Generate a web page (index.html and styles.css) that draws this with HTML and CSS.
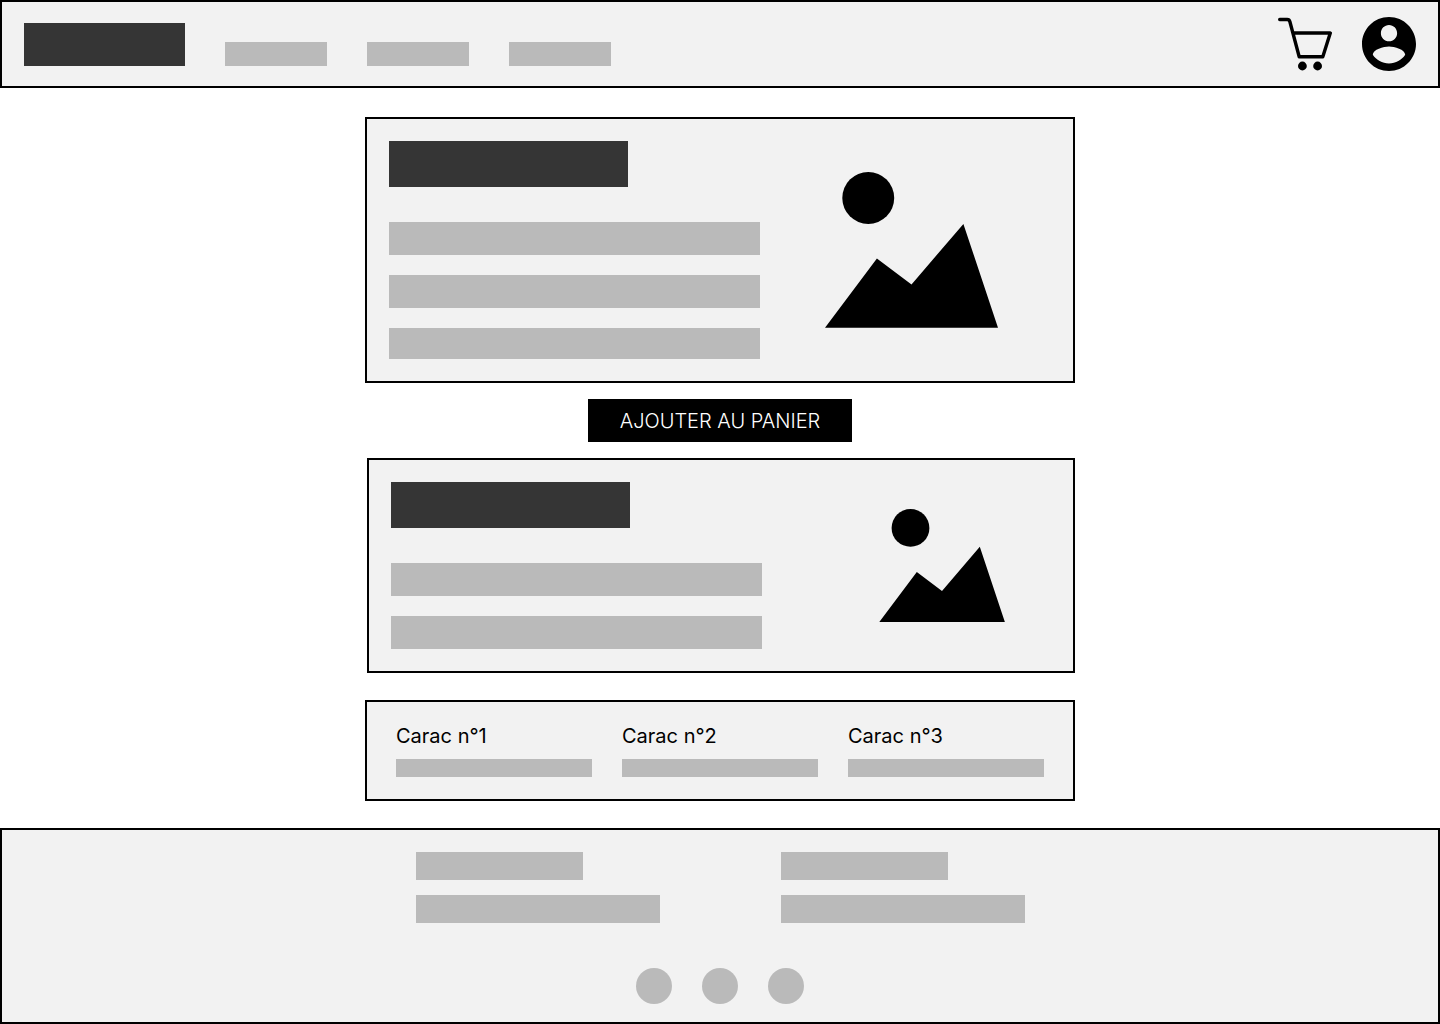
FILE: index.html
```html
<!DOCTYPE html>
<html lang="fr">
<head>
  <meta charset="utf-8">
  <meta name="viewport" content="width=device-width, initial-scale=1">
  <title>Produit</title>
  <link rel="stylesheet" href="styles.css">
</head>
<body>
  <header class="header">
    <a class="logo" href="#" aria-label="Accueil"></a>
    <nav class="nav" aria-label="Menu principal">
      <a class="nav-link" href="#" aria-label="Lien 1"></a>
      <a class="nav-link" href="#" aria-label="Lien 2"></a>
      <a class="nav-link" href="#" aria-label="Lien 3"></a>
    </nav>
    <div class="actions">
      <a class="action" href="#" aria-label="Panier">
        <svg class="icon" viewBox="0 0 54 54" aria-hidden="true">
          <path d="M1.7 2.5H9.200Q11.300 2.500 11.900 4.700L21.200 39.800H44.800L52.300 16H15.400" fill="none" stroke="#000" stroke-width="3.4" stroke-linecap="round" stroke-linejoin="round"/>
          <circle cx="24.4" cy="49" r="4.400"/>
          <circle cx="39.6" cy="49" r="4.400"/>
        </svg>
      </a>
      <a class="action" href="#" aria-label="Mon compte">
        <svg class="icon" viewBox="2 2 20 20" aria-hidden="true">
          <path d="M12 2C6.480 2 2 6.480 2 12s4.480 10 10 10 10-4.480 10-10S17.520 2 12 2zm0 3c1.660 0 3 1.340 3 3s-1.340 3-3 3-3-1.340-3-3 1.340-3 3-3zm0 14.200c-2.500 0-4.710-1.280-6-3.220.030-1.990 4-3.080 6-3.080s5.970 1.090 6 3.080c-1.290 1.940-3.500 3.220-6 3.220z"/>
        </svg>
      </a>
    </div>
  </header>

  <main class="main">
    <section class="card product">
      <div class="lines">
        <div class="title-bar"></div>
        <div class="bar"></div>
        <div class="bar"></div>
        <div class="bar bar-last"></div>
      </div>
      <svg class="picture picture-large" viewBox="0 0 20 18" role="img" aria-label="Photo du produit">
        <circle cx="5" cy="3" r="3"/>
        <path d="M0 18 6 10 10 13 16 6 20 18Z"/>
      </svg>
    </section>

    <button class="add-button" type="button">AJOUTER AU PANIER</button>

    <section class="card details">
      <div class="lines">
        <div class="title-bar"></div>
        <div class="bar"></div>
        <div class="bar"></div>
      </div>
      <svg class="picture picture-small" viewBox="0 0 20 18" role="img" aria-label="Photo de détail">
        <circle cx="5" cy="3" r="3"/>
        <path d="M0 18 6 10 10 13 16 6 20 18Z"/>
      </svg>
    </section>

    <section class="features">
      <div class="feature">
        <h2 class="feature-title">Carac n°1</h2>
        <div class="feature-bar"></div>
      </div>
      <div class="feature">
        <h2 class="feature-title">Carac n°2</h2>
        <div class="feature-bar"></div>
      </div>
      <div class="feature">
        <h2 class="feature-title">Carac n°3</h2>
        <div class="feature-bar"></div>
      </div>
    </section>
  </main>

  <footer class="footer">
    <div class="footer-columns">
      <div class="footer-column">
        <div class="footer-bar footer-bar-short"></div>
        <div class="footer-bar"></div>
      </div>
      <div class="footer-column">
        <div class="footer-bar footer-bar-short"></div>
        <div class="footer-bar"></div>
      </div>
    </div>
    <div class="socials">
      <a class="social" href="#" aria-label="Réseau 1"></a>
      <a class="social" href="#" aria-label="Réseau 2"></a>
      <a class="social" href="#" aria-label="Réseau 3"></a>
    </div>
  </footer>
</body>
</html>
```
FILE: styles.css
```css
:root {
  --panel: #f2f2f2;
  --dark: #353535;
  --grey: #bababa;
}

* {
  box-sizing: border-box;
}

body {
  margin: 0;
  background: #fff;
  color: #000;
  font-family: Inter, "Liberation Sans", sans-serif;
  font-size: 20px;
  line-height: 24px;
}

.header,
.card,
.features,
.footer {
  background: var(--panel);
  border: 2px solid #000;
}

.header {
  display: flex;
  align-items: center;
  gap: 40px;
  padding: 15px 22px;
}

.logo {
  width: 161px;
  height: 43px;
  background: var(--dark);
}

.nav {
  display: flex;
  align-items: flex-end;
  gap: 40px;
  height: 43px;
}

.nav-link {
  width: 102px;
  height: 24px;
  background: var(--grey);
}

.actions {
  display: flex;
  gap: 30px;
  margin-left: auto;
}

.action,
.icon {
  display: block;
  width: 54px;
  height: 54px;
}

.main {
  display: flex;
  flex-direction: column;
  align-items: center;
  max-width: 710px;
  margin: 29px auto 27px;
}

.card {
  display: flex;
  align-items: center;
  justify-content: space-between;
  width: 100%;
  padding: 22px;
}

.product {
  padding-right: 75px;
}

.details {
  align-self: flex-end;
  max-width: 708px;
  padding-right: 68px;
}

.lines {
  display: flex;
  flex-direction: column;
  gap: 20px;
  width: 371px;
}

.title-bar {
  width: 239px;
  height: 46px;
  margin-bottom: 15px;
  background: var(--dark);
}

.bar {
  height: 33px;
  background: var(--grey);
}

.bar-last {
  height: 31px;
}

.picture {
  display: block;
}

.picture-large {
  width: 173px;
}

.picture-small {
  width: 126px;
}

.add-button {
  min-width: 264px;
  margin: 16px 0;
  padding: 10px 20px 9px;
  border: 0;
  background: #000;
  color: #fff;
  font: inherit;
  font-weight: 300;
  cursor: pointer;
}

.features {
  display: grid;
  grid-template-columns: repeat(3, 1fr);
  gap: 30px;
  width: 100%;
  margin-top: 27px;
  padding: 22px 29px;
}

.feature {
  display: flex;
  flex-direction: column;
  gap: 11px;
}

.feature-title {
  margin: 0;
  font-size: 20px;
  font-weight: 400;
}

.feature-bar {
  height: 18px;
  background: var(--grey);
}

.footer {
  display: flex;
  flex-direction: column;
  align-items: center;
  gap: 45px;
  padding: 22px 22px 18px;
}

.footer-columns {
  display: flex;
  gap: 121px;
}

.footer-column {
  display: flex;
  flex-direction: column;
  gap: 15px;
  width: 244px;
}

.footer-bar {
  height: 28px;
  background: var(--grey);
}

.footer-bar-short {
  width: 167px;
}

.socials {
  display: flex;
  gap: 30px;
}

.social {
  width: 36px;
  height: 36px;
  border-radius: 50%;
  background: var(--grey);
}
```
